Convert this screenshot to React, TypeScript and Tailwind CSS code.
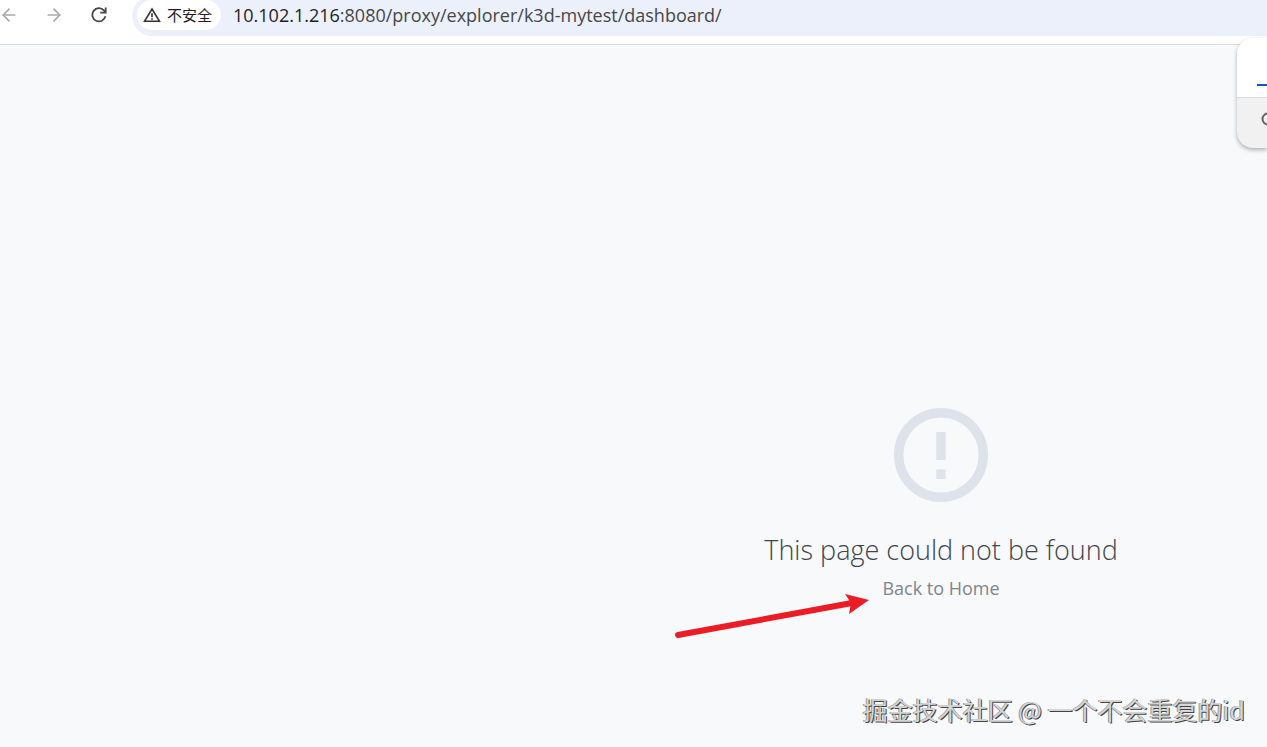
import { ArrowLeft, ArrowRight } from "lucide-react"

function ReloadIcon() {
  return (
    <svg viewBox="0 0 16 16" className="size-4" fill="none" stroke="#474747" strokeWidth="1.8" aria-hidden="true">
      <path d="M14.4 9.3A6.6 6.6 0 1 1 12.9 3.4L14.4 5.2" />
      <path d="M14.7 0.6V5.7H9.2" />
    </svg>
  )
}

function WarningIcon() {
  return (
    <svg viewBox="0 0 18 16" className="h-4 w-[18px]" fill="none" stroke="#303134" strokeWidth="1.6" aria-hidden="true">
      <path d="M9 2L16.4 14.2H1.6Z" />
      <path d="M9 6.2V10.2M9 11.2V12.8" />
    </svg>
  )
}

function ErrorCircleIcon() {
  return (
    <svg viewBox="0 0 94 94" className="size-[94px] text-[#dee3eb]" fill="currentColor" aria-hidden="true">
      <circle cx="47" cy="47" r="42.3" fill="none" stroke="currentColor" strokeWidth="9.4" />
      <path d="M42.3 24H51.7V52H42.3ZM42.3 61.5H51.7V71H42.3Z" />
    </svg>
  )
}

function PointerArrow() {
  return (
    <svg
      viewBox="0 0 196 46"
      className="absolute right-full top-6 mr-3 h-[46px] w-[196px]"
      fill="#ed1c24"
      aria-hidden="true"
    >
      <path d="M4 41L178 9" stroke="#ed1c24" strokeWidth="6" strokeLinecap="round" />
      <path d="M195 6L171 0L177 9L175 20Z" />
    </svg>
  )
}

function Toolbar() {
  return (
    <header className="flex h-[45px] items-start overflow-hidden border-b border-[#dadce0] bg-white">
      <nav className="flex h-[30px] w-[132px] shrink-0 items-center gap-[25px]">
        <button type="button" aria-label="Back" className="-ml-px text-[#a8a8a8]">
          <ArrowLeft size={20} />
        </button>
        <button type="button" aria-label="Forward" className="text-[#a8a8a8]">
          <ArrowRight size={20} />
        </button>
        <button type="button" aria-label="Reload" className="ml-0.5">
          <ReloadIcon />
        </button>
      </nav>
      <div className="-mt-1 flex h-10 min-w-0 flex-1 rounded-l-full bg-[#ebf0fa] pl-[5px] pt-1">
        <button
          type="button"
          className="flex h-[30px] shrink-0 items-center gap-1.5 rounded-full bg-white px-1.5 pr-[9px] font-['Noto_Sans_CJK_SC',sans-serif] text-[15px] text-[#1f1f1f]"
        >
          <WarningIcon />
          不安全
        </button>
        <p className="ml-3 truncate text-lg leading-[30px] text-[#474747]">
          <span className="text-[#1f1f1f]">10.102.1.216</span>
          :8080/proxy/explorer/k3d-mytest/dashboard/
        </p>
      </div>
    </header>
  )
}

function SidePopup() {
  return (
    <aside className="absolute right-0 top-[38px] w-[30px] overflow-hidden rounded-l-2xl bg-[#f1f1f1] shadow-[0_2px_4px_rgba(0,0,0,0.3)]">
      <div className="flex h-[60px] items-end justify-end border-b border-[#dadce0] bg-white pb-[11px]">
        <span className="h-0.5 w-2.5 bg-[#0b57d0]" />
      </div>
      <div className="flex h-[50px] justify-end pt-3.5">
        <svg viewBox="0 0 6 16" className="h-4 w-1.5" fill="none" stroke="#5f6368" strokeWidth="2" aria-hidden="true">
          <circle cx="7" cy="7" r="5.5" />
        </svg>
      </div>
    </aside>
  )
}

export default function App() {
  return (
    <div className="relative flex min-h-screen flex-col overflow-hidden bg-[#f7f9fb] font-['Open_Sans','Noto_Sans',sans-serif]">
      <Toolbar />
      <SidePopup />
      <main className="flex flex-1 flex-col items-center justify-center pl-[615px] pt-[221px]">
        <ErrorCircleIcon />
        <h1 className="mt-7 text-[27px] font-light leading-10 text-[#3f454d]">This page could not be found</h1>
        <div className="relative">
          <a href="#home" className="text-lg leading-9 text-[#80858f]">
            Back to Home
          </a>
          <PointerArrow />
        </div>
      </main>
      <p className="absolute bottom-[18px] right-[22px] font-['Noto_Sans_CJK_SC',sans-serif] text-[25px] leading-10 text-[#d4d4d4] [text-shadow:1px_1px_0_#444,-1px_0_0_#999]">
        掘金技术社区 @ 一个不会重复的id
      </p>
    </div>
  )
}
